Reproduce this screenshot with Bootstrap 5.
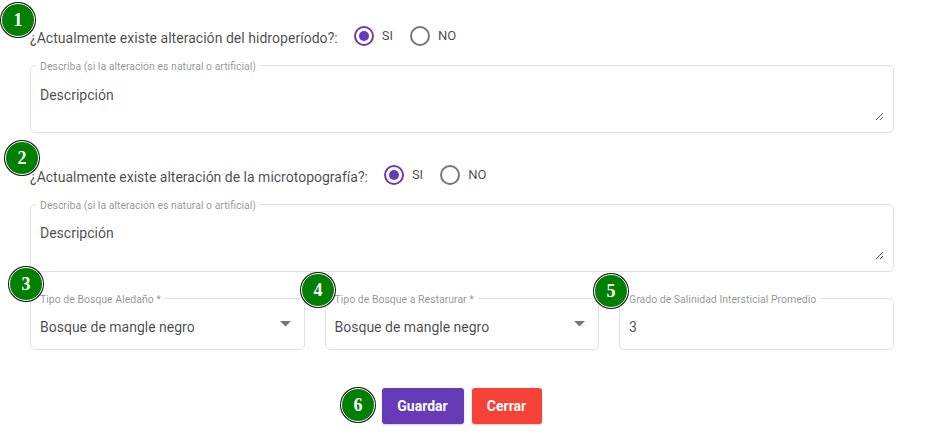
<!DOCTYPE html>
<html lang="es">
<head>
<meta charset="utf-8">
<title>Formulario</title>
<link href="https://cdn.jsdelivr.net/npm/bootstrap@5.3.0/dist/css/bootstrap.min.css" rel="stylesheet">
<style>
body{font-family:Roboto,"Liberation Sans",sans-serif;color:rgba(0,0,0,.87);background:#fff;overflow:hidden}
.sheet{padding:0 31px 18px 30px;position:relative}
.ask{height:63px;padding-top:22px}
.ask.second{height:69px;padding-top:28px}
.ask-text{font-size:14px;line-height:20px;color:rgba(0,0,0,.72);letter-spacing:.035px;margin-top:6px}
.second .ask-text{letter-spacing:0}
.opt{font-size:13px;color:rgba(0,0,0,.72);gap:8px;line-height:20px;margin-top:3px}
.opt+.opt{margin-left:17px}
.opt-label{padding-top:1px}
.ring{width:20px;height:20px;border-radius:50%;border:2px solid #757575;display:block;position:relative;flex:none}
.ring.on{border-color:#673ab7}
.ring.on::after{content:"";position:absolute;inset:3px;border-radius:50%;background:#673ab7}
.outline{border:1px solid #e0e0e0;border-radius:5px;margin:0;padding:0 9px;min-width:0;position:relative}
.outline legend{float:none;width:auto;margin:0 0 0 -4px;padding:0 4px;font-size:10.5px;line-height:4px;color:rgba(0,0,0,.45);height:4px;white-space:nowrap;overflow:visible;position:relative;top:2px}
.area{display:block;width:100%;height:54px;margin-bottom:11px;border:0;outline:0;padding:18px 0 0;font-size:14px;line-height:20px;color:rgba(0,0,0,.72);background:transparent;font-family:inherit}
.area-tight{padding-top:17px}
.pick-row{gap:20px;margin-top:24px;padding-right:.5px}
.pick-row>fieldset{flex:1 1 0}
.pick{border:0;box-shadow:none!important;padding:6px 0 2px;height:49px;font-size:14px;line-height:20px;color:rgba(0,0,0,.72);background-color:transparent;background-image:url("data:image/svg+xml,%3Csvg xmlns='http://www.w3.org/2000/svg' width='12' height='6'%3E%3Cpath d='M0 0h11l-5.500 5.500z' fill='%23757575'/%3E%3C/svg%3E");background-position:right 3px top 21px;background-size:12px 6px;background-repeat:no-repeat;border-radius:0}
.num{border:0;outline:0;padding:6px 0 2px;height:49px;font-size:14px;color:rgba(0,0,0,.72);width:100%;background:transparent;display:block;font-family:inherit}
.actions{margin-top:38px;gap:8px;padding-right:1px}
.act{font-size:14px;font-weight:700;color:#fff;border:0;border-radius:3px;height:36px;padding:0;line-height:36px;box-shadow:0 1px 2px rgba(0,0,0,.2)}
.act-save{width:82px;background:#673ab7}
.act-close{width:70px;background:#f44336}
.act:hover{color:#fff}
.step{position:absolute;width:34px;height:34px;border-radius:50%;background:#008000;border:1px solid #fff;box-shadow:0 0 0 1px #111;display:flex;align-items:center;justify-content:center;color:#fff;font-family:"Liberation Serif",serif;font-weight:700;font-size:18px;line-height:1;z-index:2}
.s1{left:1px;top:3px}.s2{left:5px;top:141px}.s3{left:9px;top:267px}.s4{left:301px;top:273px}.s5{left:594px;top:274px}.s6{left:341px;top:388px}
</style>
</head>
<body>
<div class="sheet">
  <div class="d-flex align-items-start ask">
    <span class="ask-text">¿Actualmente existe alteración del hidroperíodo?:</span>
    <span class="d-flex align-items-center opt ms-3"><i class="ring on"></i><span class="opt-label">SI</span></span>
    <span class="d-flex align-items-center opt"><i class="ring"></i><span class="opt-label">NO</span></span>
  </div>
  <fieldset class="outline">
    <legend>Describa (si la alteración es natural o artificial)</legend>
    <textarea class="area">Descripción</textarea>
  </fieldset>
  <div class="d-flex align-items-start ask second">
    <span class="ask-text">¿Actualmente existe alteración de la microtopografía?:</span>
    <span class="d-flex align-items-center opt ms-3"><i class="ring on"></i><span class="opt-label">SI</span></span>
    <span class="d-flex align-items-center opt"><i class="ring"></i><span class="opt-label">NO</span></span>
  </div>
  <fieldset class="outline">
    <legend>Describa (si la alteración es natural o artificial)</legend>
    <textarea class="area area-tight">Descripción</textarea>
  </fieldset>
  <div class="d-flex pick-row">
    <fieldset class="outline">
      <legend>Tipo de Bosque Aledaño *</legend>
      <select class="form-select pick"><option>Bosque de mangle negro</option></select>
    </fieldset>
    <fieldset class="outline">
      <legend>Tipo de Bosque a Restarurar *</legend>
      <select class="form-select pick"><option>Bosque de mangle negro</option></select>
    </fieldset>
    <fieldset class="outline">
      <legend>Grado de Salinidad Intersticial Promedio</legend>
      <input class="num" type="text" value="3">
    </fieldset>
  </div>
  <div class="d-flex justify-content-center actions">
    <button class="btn act act-save" type="button">Guardar</button>
    <button class="btn act act-close" type="button">Cerrar</button>
  </div>
  <span class="step s1">1</span>
  <span class="step s2">2</span>
  <span class="step s3">3</span>
  <span class="step s4">4</span>
  <span class="step s5">5</span>
  <span class="step s6">6</span>
</div>
<script src="https://cdn.jsdelivr.net/npm/bootstrap@5.3.0/dist/js/bootstrap.bundle.min.js"></script>
</body>
</html>
